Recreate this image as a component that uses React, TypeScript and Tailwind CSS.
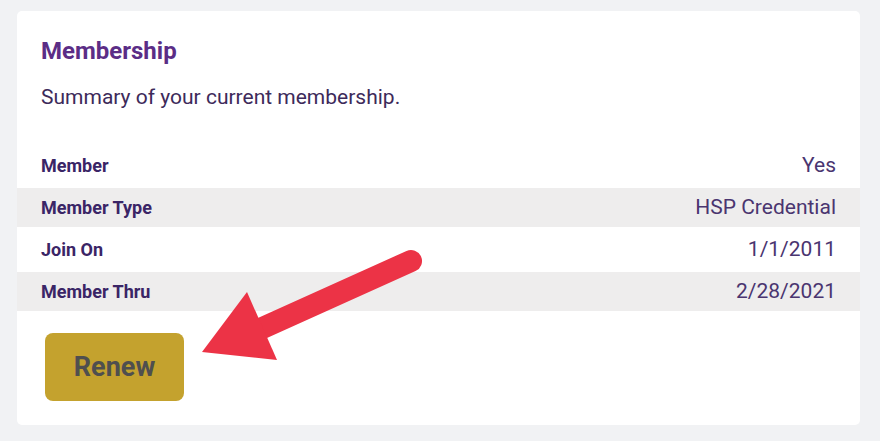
import React from 'react';

const ROWS = [
  { label: 'Member', value: 'Yes' },
  { label: 'Member Type', value: 'HSP Credential' },
  { label: 'Join On', value: '1/1/2011' },
  { label: 'Member Thru', value: '2/28/2021' },
];

function Arrow() {
  return (
    <svg className="absolute left-0 top-0 pointer-events-none" width="880" height="441" viewBox="0 0 880 441">
      <line x1="411" y1="261" x2="258" y2="330" stroke="#ec3346" strokeWidth="22" strokeLinecap="round" />
      <polygon points="202,352 247,292 277,360" fill="#ec3346" />
    </svg>
  );
}

export default function App() {
  return (
    <div className="relative w-[880px] h-[441px] bg-[#f1f2f4] pt-[11px] pl-[17px]" style={{ fontFamily: 'Roboto, "Liberation Sans", sans-serif' }}>
      <div className="w-[843px] h-[414px] bg-white rounded-[5px] flex flex-col">
        <div className="px-6 pt-[25px]">
          <h2 className="text-[24px] leading-[30px] font-bold text-[#5b2d86]">Membership</h2>
          <p className="mt-[19px] text-[21px] leading-6 text-[#3d2a5a]">Summary of your current membership.</p>
        </div>
        <div className="mt-[37px] flex flex-col gap-[3px]">
          {ROWS.map((r, i) => (
            <div key={r.label} className={`h-[39px] px-6 flex items-center justify-between ${i % 2 === 1 ? 'bg-[#eeeded]' : ''}`}>
              <span className="text-[18px] font-bold text-[#3a2566]">{r.label}</span>
              <span className="text-[21px] text-[#4a3570]">{r.value}</span>
            </div>
          ))}
        </div>
        <div className="pl-[28px] pt-[22px]">
          <button className="w-[139px] h-[68px] rounded-[8px] bg-[#c4a22e] text-[27px] font-bold text-[#4f4f4f]">Renew</button>
        </div>
      </div>
      <Arrow />
    </div>
  );
}
